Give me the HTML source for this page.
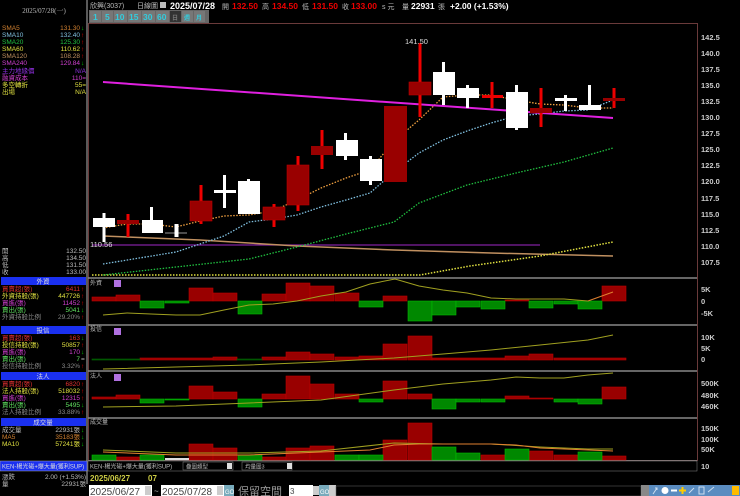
<!DOCTYPE html>
<html><head><meta charset="utf-8"><style>
html,body{margin:0;padding:0;background:#000;width:740px;height:496px;overflow:hidden}
svg{display:block}
text{font-family:"Liberation Sans","Noto Sans CJK TC",sans-serif}
.s{font-size:7px}
.m{font-family:"Liberation Serif","Noto Serif CJK SC",serif}
</style></head><body>
<svg width="740" height="496" viewBox="0 0 740 496" xmlns="http://www.w3.org/2000/svg">
<rect width="740" height="496" fill="#000"/>
<rect x="86" y="0" width="2" height="484" fill="#5a5a5a"/>
<!-- top bar -->
<text x="90" y="8" class="s" fill="#bbb">欣興(3037)</text>
<text x="137" y="8" class="s" fill="#bbb">日線圖</text>
<rect x="160" y="2" width="6" height="6" fill="#bbb"/>
<text x="170" y="9" font-size="9" font-weight="bold" fill="#fff">2025/07/28</text>
<text x="222" y="9" class="s" fill="#bbb">開</text><text x="232" y="9" font-size="8.5" font-weight="bold" fill="#e00">132.50</text>
<text x="262" y="9" class="s" fill="#bbb">高</text><text x="272" y="9" font-size="8.5" font-weight="bold" fill="#e00">134.50</text>
<text x="302" y="9" class="s" fill="#bbb">低</text><text x="312" y="9" font-size="8.5" font-weight="bold" fill="#e00">131.50</text>
<text x="342" y="9" class="s" fill="#bbb">收</text><text x="351" y="9" font-size="8.5" font-weight="bold" fill="#e00">133.00</text>
<text x="382" y="9" class="s" fill="#bbb">s 元</text>
<text x="402" y="9" class="s" fill="#bbb">量</text><text x="411" y="9" font-size="8.5" font-weight="bold" fill="#fff">22931</text>
<text x="438" y="9" class="s" fill="#bbb">張</text>
<text x="450" y="9" font-size="8.5" font-weight="bold" fill="#fff">+2.00 (+1.53%)</text>
<!-- period buttons -->
<rect x="89" y="10" width="120" height="13" fill="#666"/>
<g font-size="8.5" font-weight="bold" fill="#3cd">
<rect x="90" y="11" width="11" height="11" fill="#777"/><text x="93" y="20">1</text>
<rect x="102" y="11" width="11" height="11" fill="#777"/><text x="105" y="20">5</text>
<rect x="114" y="11" width="13" height="11" fill="#777"/><text x="115" y="20">10</text>
<rect x="128" y="11" width="13" height="11" fill="#777"/><text x="129" y="20">15</text>
<rect x="142" y="11" width="13" height="11" fill="#777"/><text x="143" y="20">30</text>
<rect x="156" y="11" width="13" height="11" fill="#777"/><text x="157" y="20">60</text>
<rect x="170" y="11" width="11" height="11" fill="#333"/><text x="172" y="20" font-size="6" fill="#777">日</text>
<rect x="182" y="11" width="11" height="11" fill="#777"/><text x="184" y="20" font-size="6">週</text>
<rect x="194" y="11" width="11" height="11" fill="#777"/><text x="196" y="20" font-size="6">月</text>
</g>
<rect x="88.5" y="23.5" width="609" height="437" fill="none" stroke="#6a3a3a"/>
<line x1="88" y1="278" x2="697" y2="278" stroke="#888" stroke-width="1.5"/>
<line x1="88" y1="325" x2="697" y2="325" stroke="#888" stroke-width="1.5"/>
<line x1="88" y1="371" x2="697" y2="371" stroke="#888" stroke-width="1.5"/>
<line x1="88" y1="418" x2="697" y2="418" stroke="#888" stroke-width="1.5"/>
<line x1="88" y1="461" x2="697" y2="461" stroke="#888" stroke-width="1.5"/>

<!-- left panel -->
<text x="44" y="13" class="s m" fill="#bbb" text-anchor="middle">2025/07/28(一)</text>
<g class="m" font-size="6.5">
<text x="2" y="30" fill="#d08030">SMA5</text><text x="80" y="30" fill="#d08030" text-anchor="end">131.30</text><text x="81" y="30" fill="#0c0">↓</text>
<text x="2" y="37" fill="#80c0e0">SMA10</text><text x="80" y="37" fill="#80c0e0" text-anchor="end">132.40</text><text x="81" y="37" fill="#e00">↑</text>
<text x="2" y="44" fill="#20c040">SMA20</text><text x="80" y="44" fill="#20c040" text-anchor="end">125.30</text><text x="81" y="44" fill="#e00">↑</text>
<text x="2" y="51" fill="#e0e040">SMA60</text><text x="80" y="51" fill="#e0e040" text-anchor="end">110.62</text><text x="81" y="51" fill="#e00">↑</text>
<text x="2" y="58" fill="#c09060">SMA120</text><text x="80" y="58" fill="#c09060" text-anchor="end">108.28</text><text x="81" y="58" fill="#e00">↑</text>
<text x="2" y="65" fill="#d040d0">SMA240</text><text x="80" y="65" fill="#d040d0" text-anchor="end">129.84</text><text x="81" y="65" fill="#0c0">↓</text>
<text x="2" y="73" fill="#9030e0">主力地緣價</text><text x="86" y="73" fill="#9030e0" text-anchor="end">N/A</text>
<text x="2" y="80" fill="#d040d0">融資成本</text><text x="86" y="80" fill="#d040d0" text-anchor="end">110=</text>
<text x="2" y="87" fill="#e0e040">多空轉折</text><text x="86" y="87" fill="#e0e040" text-anchor="end">55=</text>
<text x="2" y="94" fill="#e0e040">出場</text><text x="86" y="94" fill="#e0e040" text-anchor="end">N/A</text>

<text x="2" y="253" fill="#bbb">開</text><text x="86" y="253" fill="#bbb" text-anchor="end">132.50</text>
<text x="2" y="260" fill="#bbb">高</text><text x="86" y="260" fill="#bbb" text-anchor="end">134.50</text>
<text x="2" y="267" fill="#bbb">低</text><text x="86" y="267" fill="#bbb" text-anchor="end">131.50</text>
<text x="2" y="274" fill="#bbb">收</text><text x="86" y="274" fill="#bbb" text-anchor="end">133.00</text>

<rect x="1" y="277" width="85" height="8" fill="#1a30f0"/><text x="43" y="283.5" fill="#ddd" text-anchor="middle">外資</text>
<text x="2" y="291" fill="#e03030">買賣超(張)</text><text x="80" y="291" fill="#e03030" text-anchor="end">6411</text><text x="81" y="291" fill="#e00">↑</text>
<text x="2" y="298" fill="#e0e040">外資持股(張)</text><text x="80" y="298" fill="#e0e040" text-anchor="end">447726</text><text x="81" y="298" fill="#e00">↑</text>
<text x="2" y="305" fill="#d040d0">買進(張)</text><text x="80" y="305" fill="#d040d0" text-anchor="end">11452</text><text x="81" y="305" fill="#e00">↑</text>
<text x="2" y="312" fill="#60e060">賣出(張)</text><text x="80" y="312" fill="#60e060" text-anchor="end">5041</text><text x="81" y="312" fill="#0c0">↓</text>
<text x="2" y="319" fill="#888">外資持股比例</text><text x="80" y="319" fill="#888" text-anchor="end">29.20%</text><text x="81" y="319" fill="#e00">↑</text>

<rect x="1" y="326" width="85" height="8" fill="#1a30f0"/><text x="43" y="332.5" fill="#ddd" text-anchor="middle">投信</text>
<text x="2" y="340" fill="#e03030">買賣超(張)</text><text x="80" y="340" fill="#e03030" text-anchor="end">163</text><text x="81" y="340" fill="#0c0">↓</text>
<text x="2" y="347" fill="#e0e040">投信持股(張)</text><text x="80" y="347" fill="#e0e040" text-anchor="end">50857</text><text x="81" y="347" fill="#e00">↑</text>
<text x="2" y="354" fill="#d040d0">買進(張)</text><text x="80" y="354" fill="#d040d0" text-anchor="end">170</text><text x="81" y="354" fill="#0c0">↓</text>
<text x="2" y="361" fill="#60e060">賣出(張)</text><text x="80" y="361" fill="#60e060" text-anchor="end">7</text><text x="81" y="361" fill="#bbb">=</text>
<text x="2" y="368" fill="#888">投信持股比例</text><text x="80" y="368" fill="#888" text-anchor="end">3.32%</text><text x="81" y="368" fill="#e00">↑</text>

<rect x="1" y="372" width="85" height="8" fill="#1a30f0"/><text x="43" y="378.5" fill="#ddd" text-anchor="middle">法人</text>
<text x="2" y="386" fill="#e03030">買賣超(張)</text><text x="80" y="386" fill="#e03030" text-anchor="end">6820</text><text x="81" y="386" fill="#e00">↑</text>
<text x="2" y="393" fill="#e0e040">法人持股(張)</text><text x="80" y="393" fill="#e0e040" text-anchor="end">518032</text><text x="81" y="393" fill="#e00">↑</text>
<text x="2" y="400" fill="#d040d0">買進(張)</text><text x="80" y="400" fill="#d040d0" text-anchor="end">12315</text><text x="81" y="400" fill="#e00">↑</text>
<text x="2" y="407" fill="#60e060">賣出(張)</text><text x="80" y="407" fill="#60e060" text-anchor="end">5495</text><text x="81" y="407" fill="#0c0">↓</text>
<text x="2" y="414" fill="#888">法人持股比例</text><text x="80" y="414" fill="#888" text-anchor="end">33.88%</text><text x="81" y="414" fill="#e00">↑</text>

<rect x="1" y="418" width="85" height="8" fill="#1a30f0"/><text x="43" y="424.5" fill="#ddd" text-anchor="middle">成交量</text>
<text x="2" y="432" fill="#bbb">成交量</text><text x="80" y="432" fill="#bbb" text-anchor="end">22931張</text><text x="81" y="432" fill="#0c0">↓</text>
<text x="2" y="439" fill="#d08030">MA5</text><text x="80" y="439" fill="#d08030" text-anchor="end">35183張</text><text x="81" y="439" fill="#0c0">↓</text>
<text x="2" y="446" fill="#e0e040">MA10</text><text x="80" y="446" fill="#e0e040" text-anchor="end">57241張</text><text x="81" y="446" fill="#0c0">↓</text>

<rect x="0" y="461" width="87" height="10" fill="#1a30f0" stroke="#aaa" stroke-width="0.5"/><text x="2" y="468.5" fill="#ddd" font-size="6">KEN-楊光磁+爆大量(獲利SUP)</text>
<text x="2" y="479" fill="#bbb">漲跌</text><text x="86" y="479" fill="#bbb" text-anchor="end">2.00 (+1.53%)</text>
<text x="2" y="486" fill="#bbb">量</text><text x="86" y="486" fill="#bbb" text-anchor="end">22931張</text>
</g>

<g font-size="7.5" font-weight="bold" fill="#ccc">
<text x="701" y="40">142.5</text><text x="701" y="56">140.0</text><text x="701" y="72">137.5</text><text x="701" y="88">135.0</text>
<text x="701" y="104">132.5</text><text x="701" y="120">130.0</text><text x="701" y="136">127.5</text><text x="701" y="152">125.0</text>
<text x="701" y="168">122.5</text><text x="701" y="184">120.0</text><text x="701" y="201">117.5</text><text x="701" y="217">115.0</text>
<text x="701" y="233">112.5</text><text x="701" y="249">110.0</text><text x="701" y="265">107.5</text>
<text x="701" y="292">5K</text><text x="701" y="304">0</text><text x="701" y="316">-5K</text>
<text x="701" y="340">10K</text><text x="701" y="351">5K</text><text x="701" y="362">0</text>
<text x="701" y="386">500K</text><text x="701" y="398">480K</text><text x="701" y="409">460K</text>
<text x="701" y="431">150K</text><text x="701" y="442">100K</text><text x="701" y="452">50K</text><text x="701" y="469">10</text>
</g>

<line x1="92" y1="245" x2="540" y2="245" stroke="#8020a0" stroke-width="1.2"/>
<polyline fill="none" stroke="#c09060" stroke-width="1.5" points="103,236 200,240 297,246 394,250 491,253 613,256"/>
<polyline fill="none" stroke="#e0e040" stroke-width="1.5" stroke-dasharray="1.5,1.5" points="92,275 420,275 470,266 540,256 613,242"/>
<polyline fill="none" stroke="#20c040" stroke-width="1.3" stroke-dasharray="1.5,1.5" points="103,275 176,267 249,259 297,247 346,234 394,222 419,203 467,185 516,173 564,162 613,148"/>
<polyline fill="none" stroke="#80c0e0" stroke-width="1.3" stroke-dasharray="1.5,1.5" points="103,264 176,252 224,236 249,222 273,219 297,215 321,207 346,200 370,193 394,172 419,153 443,140 467,131 491,123 516,116 540,114 564,111 588,110 613,100"/>
<polyline fill="none" stroke="#f0a040" stroke-width="1.3" stroke-dasharray="1.5,1.5" points="103,228 127,224 151,224 176,227 200,221 224,216 249,215 273,211 297,200 321,188 346,178 370,170 394,141 419,120 443,97 467,95 491,95 516,100 540,104 564,105 588,108 613,108"/>
<line x1="103" y1="82" x2="613" y2="118" stroke="#e020e0" stroke-width="2"/>

<g fill="#fff">
<rect x="102.5" y="213" width="3" height="29"/><rect x="93" y="218" width="22" height="9"/>
<rect x="150" y="207" width="3" height="26"/><rect x="142" y="220" width="21" height="13"/>
<rect x="165" y="232.5" width="22" height="1" fill="#999"/><rect x="174.5" y="224" width="4" height="13"/>
<rect x="223" y="175" width="3" height="33"/><rect x="214" y="190" width="22" height="3"/>
<rect x="247" y="179" width="3" height="35"/><rect x="238" y="181" width="22" height="33"/>
<rect x="344" y="133" width="3" height="27"/><rect x="336" y="140" width="22" height="16"/>
<rect x="369" y="156" width="3" height="29"/><rect x="360" y="159" width="22" height="22"/>
<rect x="442" y="62" width="3" height="43"/><rect x="433" y="72" width="22" height="23"/>
<rect x="466" y="85" width="3" height="23"/><rect x="457" y="88" width="22" height="10"/>
<rect x="515" y="85" width="3" height="45"/><rect x="506" y="92" width="22" height="36"/>
<rect x="564" y="95" width="3" height="16"/><rect x="555" y="98" width="22" height="3"/>
<rect x="588" y="85" width="3" height="25"/><rect x="579" y="105" width="22" height="5"/>
</g>
<g>
<rect x="126.5" y="214" width="3" height="23" fill="#e00"/><rect x="117" y="220" width="22" height="4" fill="#900"/>
<rect x="199.5" y="185" width="3" height="39" fill="#e00"/><rect x="190" y="201" width="22" height="20" fill="#900" stroke="#b00" stroke-width="0.6"/>
<rect x="272.5" y="204" width="3" height="23" fill="#e00"/><rect x="263" y="207" width="22" height="13" fill="#900" stroke="#b00" stroke-width="0.6"/>
<rect x="296.5" y="156" width="3" height="55" fill="#e00"/><rect x="287" y="165" width="22" height="40" fill="#900" stroke="#b00" stroke-width="0.6"/>
<rect x="320.5" y="130" width="3" height="39" fill="#e00"/><rect x="311" y="146" width="22" height="9" fill="#900"/>
<rect x="384" y="106" width="23" height="76" fill="#900"/>
<rect x="418.5" y="43" width="3" height="74" fill="#e00"/><rect x="409" y="82" width="22" height="13" fill="#900" stroke="#b00" stroke-width="0.6"/>
<rect x="490.5" y="82" width="3" height="26" fill="#e00"/><rect x="482" y="95" width="21" height="3" fill="#e00"/>
<rect x="539.5" y="88" width="3" height="39" fill="#e00"/><rect x="530" y="108" width="22" height="5" fill="#900"/>
<rect x="612.5" y="88" width="3" height="20" fill="#e00"/><rect x="603" y="98" width="22" height="3" fill="#900"/>
</g>
<text x="90" y="247" font-size="7.5" fill="#ddd">110.56</text>
<text x="405" y="44" font-size="7.5" fill="#ddd">141.50</text>

<g font-size="6" fill="#bbb">
<text x="90" y="285">外資</text><text x="90" y="331">投信</text><text x="90" y="378">法人</text><text x="90" y="424">成交量</text>
</g>
<g fill="#b070e0"><rect x="114" y="280" width="7" height="7"/><rect x="114" y="328" width="7" height="7"/><rect x="114" y="374" width="7" height="7"/></g>

<g stroke-width="0.6">
<g fill="#900" stroke="#b00">
<rect x="92" y="297" width="24" height="4"/><rect x="116" y="295" width="24" height="6"/>
<rect x="189" y="288" width="24" height="13"/><rect x="213" y="293" width="24" height="8"/>
<rect x="262" y="294" width="24" height="7"/><rect x="286" y="283" width="24" height="18"/><rect x="310" y="286" width="24" height="15"/><rect x="335" y="293" width="24" height="8"/>
<rect x="383" y="296" width="24" height="5"/><rect x="505" y="300" width="24" height="1"/><rect x="602" y="286" width="24" height="15"/>
</g>
<g fill="#080" stroke="#0b0">
<rect x="140" y="301" width="24" height="7"/><rect x="165" y="301" width="24" height="2"/><rect x="238" y="301" width="24" height="13"/>
<rect x="359" y="301" width="24" height="6"/><rect x="408" y="301" width="24" height="20"/><rect x="432" y="301" width="24" height="14"/>
<rect x="456" y="301" width="24" height="6"/><rect x="481" y="301" width="24" height="8"/><rect x="529" y="301" width="24" height="7"/>
<rect x="554" y="301" width="24" height="3"/><rect x="578" y="301" width="24" height="8"/>
</g>
<g fill="#900" stroke="#b00">
<rect x="140" y="358" width="97" height="2"/><rect x="213" y="357" width="24" height="3"/>
<rect x="262" y="357" width="24" height="3"/><rect x="286" y="352" width="24" height="8"/><rect x="310" y="354" width="24" height="6"/>
<rect x="335" y="357" width="24" height="3"/><rect x="359" y="356" width="24" height="4"/><rect x="383" y="344" width="24" height="16"/>
<rect x="408" y="336" width="24" height="24"/><rect x="432" y="358" width="73" height="2"/><rect x="505" y="356" width="24" height="4"/>
<rect x="529" y="354" width="24" height="6"/><rect x="554" y="358" width="72" height="2"/>
</g>
<g fill="#040" stroke="#060"><rect x="92" y="359" width="48" height="1"/><rect x="237" y="359" width="25" height="1"/></g>
<g fill="#900" stroke="#b00">
<rect x="92" y="397" width="24" height="2"/><rect x="116" y="395" width="24" height="4"/><rect x="189" y="386" width="24" height="13"/>
<rect x="213" y="392" width="24" height="7"/><rect x="262" y="394" width="24" height="5"/><rect x="286" y="376" width="24" height="23"/>
<rect x="310" y="384" width="24" height="15"/><rect x="335" y="394" width="24" height="5"/><rect x="383" y="381" width="24" height="18"/>
<rect x="408" y="394" width="24" height="5"/><rect x="505" y="396" width="24" height="3"/><rect x="529" y="398" width="24" height="1"/>
<rect x="602" y="387" width="24" height="12"/>
</g>
<g fill="#080" stroke="#0b0">
<rect x="140" y="399" width="24" height="4"/><rect x="165" y="399" width="24" height="1"/><rect x="238" y="399" width="24" height="8"/>
<rect x="359" y="399" width="24" height="3"/><rect x="432" y="399" width="24" height="10"/><rect x="456" y="399" width="24" height="3"/>
<rect x="481" y="399" width="24" height="3"/><rect x="554" y="399" width="24" height="3"/><rect x="578" y="399" width="24" height="5"/>
</g>
<g fill="#900" stroke="#b00">
<rect x="116" y="457" width="24" height="3"/><rect x="189" y="444" width="24" height="16"/><rect x="213" y="448" width="24" height="12"/>
<rect x="262" y="457" width="24" height="3"/><rect x="286" y="448" width="24" height="12"/><rect x="310" y="446" width="24" height="14"/>
<rect x="383" y="440" width="24" height="20"/><rect x="408" y="423" width="24" height="37"/><rect x="481" y="455" width="24" height="5"/>
<rect x="529" y="451" width="24" height="9"/><rect x="554" y="455" width="24" height="5"/><rect x="602" y="456" width="24" height="4"/>
</g>
<g fill="#080" stroke="#0b0">
<rect x="92" y="455" width="24" height="5"/><rect x="140" y="455" width="24" height="5"/><rect x="238" y="455" width="24" height="5"/>
<rect x="335" y="455" width="24" height="5"/><rect x="359" y="455" width="24" height="5"/><rect x="432" y="447" width="24" height="13"/>
<rect x="456" y="453" width="24" height="7"/><rect x="505" y="449" width="24" height="11"/><rect x="578" y="452" width="24" height="8"/>
</g>
<rect x="165" y="458" width="24" height="2" fill="#ddd"/>
</g>
<g fill="none" stroke-width="1">
<polyline stroke="#a0a020" points="103,315 127,313 151,314 176,315 200,315 224,310 249,305 273,304 297,301 321,296 346,292 370,284 395,279 419,286 443,290 467,293 491,298 516,299 540,299 564,299 588,301"/>
<polyline stroke="#e08030" points="588,301 613,292"/>
<polyline stroke="#a0a020" points="103,369 176,367 249,365 321,362 394,358 443,354 491,350 540,345 588,340 613,335"/>
<polyline stroke="#a0a020" points="103,407 176,406 249,403 321,400 394,390 443,384 491,380 516,377 540,378 564,378 588,375 613,373"/>
<polyline stroke="#a0a020" points="103,450 176,453 249,453 321,451 394,443 443,444 491,444 540,447 588,449 613,449"/>
<polyline stroke="#e08030" points="103,452 176,455 249,455 321,452 370,450 394,445 419,444 443,444 491,444 516,445 540,448 613,451"/>
</g>

<rect x="88" y="461" width="609" height="10" fill="#000" stroke="#888" stroke-width="0.5"/>
<text x="90" y="468.5" font-size="6" fill="#bbb">KEN-楊光磁+爆大量(獲利SUP)</text>
<rect x="183" y="462" width="50" height="8" fill="#000" stroke="#888" stroke-width="0.5"/><text x="186" y="468.5" font-size="5.5" fill="#bbb">疊圖類型</text><rect x="227" y="463" width="5" height="6" fill="#ddd"/>
<rect x="242" y="462" width="50" height="8" fill="#000" stroke="#888" stroke-width="0.5"/><text x="245" y="468.5" font-size="5.5" fill="#bbb">均量圖3</text><rect x="287" y="463" width="5" height="6" fill="#ddd"/>
<text x="90" y="481" font-size="8" font-weight="bold" fill="#cc4">2025/06/27</text>
<text x="148" y="481" font-size="8" font-weight="bold" fill="#cc4">07</text>
<rect x="89" y="485" width="63" height="11" fill="#fff"/><text x="90" y="495" font-size="10" fill="#444">2025/06/27</text><rect x="145" y="486" width="6" height="9" fill="#ccc"/>
<text x="154" y="494" font-size="8" fill="#bbb">~</text>
<rect x="161" y="485" width="63" height="11" fill="#fff"/><text x="162" y="495" font-size="10" fill="#444">2025/07/28</text><rect x="217" y="486" width="6" height="9" fill="#ccc"/>
<rect x="224" y="485" width="10" height="11" fill="#7ab"/><text x="225" y="494" font-size="6" fill="#fff">GO</text>
<text x="238" y="495" font-size="11" fill="#999">保留空間</text>
<rect x="289" y="485" width="24" height="11" fill="#fff"/><text x="290" y="494" font-size="8" fill="#444">3</text><rect x="313" y="486" width="6" height="9" fill="#ccc"/>
<rect x="319" y="485" width="10" height="11" fill="#7ab"/><text x="320" y="494" font-size="6" fill="#fff">GO</text>
<rect x="329" y="485" width="7" height="11" fill="#ccc"/>
<rect x="336" y="486" width="305" height="10" fill="#000" stroke="#666" stroke-width="0.5"/>
<rect x="641" y="485" width="8" height="11" fill="#888"/>
<rect x="649" y="485" width="91" height="11" fill="#5a8cc0"/>
<path d="M653 494 L657 488 M655 488 L657 488 L657 490" stroke="#cde" stroke-width="1" fill="none"/>
<circle cx="665" cy="490.5" r="3.5" fill="#fff"/><rect x="671" y="489.5" width="6" height="2" fill="#fff"/>
<rect x="679" y="489.5" width="7" height="2" fill="#fc0"/><rect x="681.5" y="487" width="2" height="7" fill="#fc0"/>
<path d="M689 493 L694 488 M699 487 h5 v7 h-5z M708 492 l6 -5" stroke="#cde" stroke-width="1" fill="none"/>
<rect x="732" y="486" width="7" height="9" fill="#fb0"/>
</svg>
</body></html>
